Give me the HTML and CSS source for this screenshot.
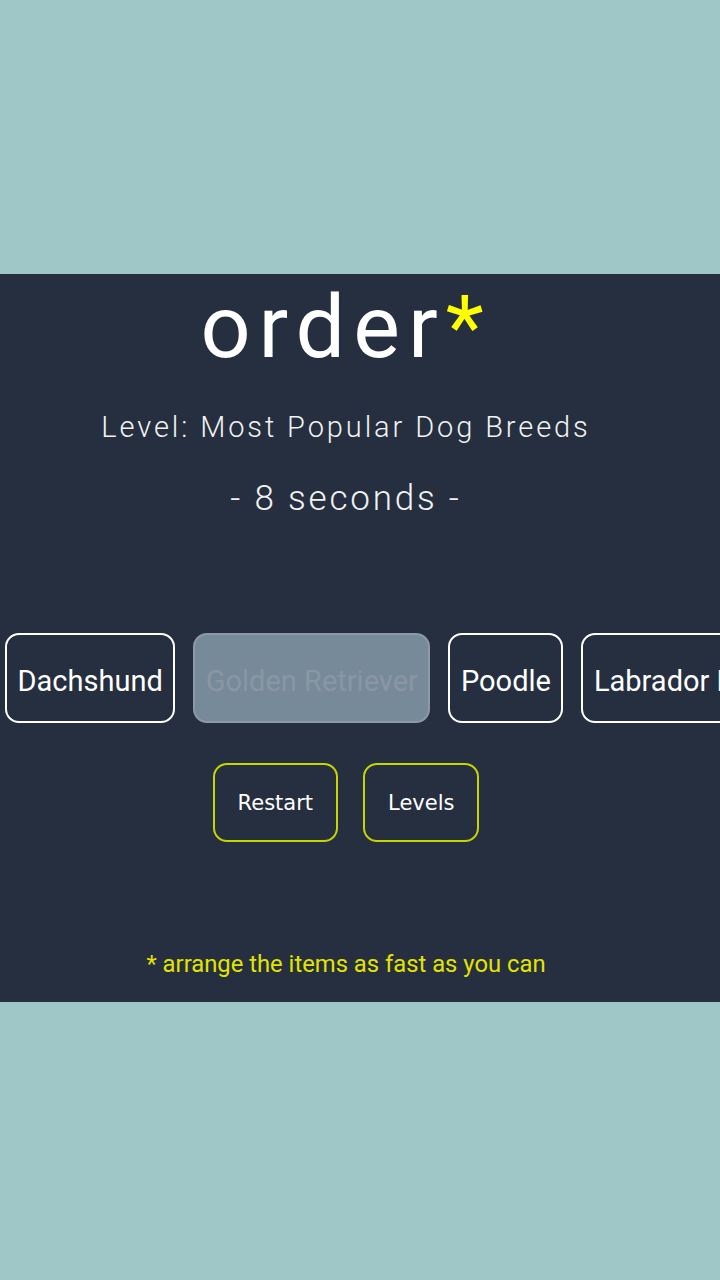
FILE: index.html
```html
<!DOCTYPE html>
<html lang="en">
<head>
<meta charset="utf-8">
<title>order*</title>
<link rel="stylesheet" href="styles.css">
</head>
<body>
<main class="panel">
  <h1 class="title">order<span class="star">*</span></h1>
  <p class="level">Level: Most Popular Dog Breeds</p>
  <p class="timer">- 8 seconds -</p>
  <div class="items">
    <div class="item">Dachshund</div>
    <div class="item item-dragging">Golden Retriever</div>
    <div class="item">Poodle</div>
    <div class="item">Labrador Retriever</div>
    <div class="item">German Shepherd</div>
  </div>
  <div class="controls">
    <button class="control">Restart</button>
    <button class="control">Levels</button>
  </div>
  <p class="hint">* arrange the items as fast as you can</p>
</main>
</body>
</html>
```

FILE: styles.css
```css
html, body {
  margin: 0;
  padding: 0;
}
body {
  background: #a0c7c8;
  height: 1280px;
  overflow: hidden;
  padding-top: 274px;
  box-sizing: border-box;
  font-family: Roboto, "Liberation Sans", sans-serif;
}
.panel {
  background: #252f3f;
  color: #ffffff;
  padding: 3px 28px 23px 0;
  display: flex;
  flex-direction: column;
  align-items: center;
}
.title {
  margin: 0;
  font-size: 88px;
  line-height: 100px;
  font-weight: 400;
  letter-spacing: 8px;
}
.star {
  color: #ffff00;
}
.level {
  margin: 30px 0 0;
  font-size: 29px;
  line-height: 40px;
  font-weight: 300;
  letter-spacing: 2.9px;
  color: #f2f2f2;
}
.timer {
  margin: 30px 0 0;
  font-size: 35px;
  line-height: 44px;
  font-weight: 300;
  letter-spacing: 2.8px;
  color: #f2f2f2;
}
.items {
  align-self: flex-start;
  margin-top: 112px;
  padding-left: 5px;
  display: flex;
  flex-wrap: nowrap;
  gap: 18px;
}
.item {
  flex: none;
  box-sizing: border-box;
  height: 90px;
  padding: 5px 10.5px 0;
  border: 2px solid #ffffff;
  border-radius: 14px;
  display: flex;
  align-items: center;
  font-size: 29px;
  font-weight: 400;
  white-space: nowrap;
  color: #ffffff;
}
.item-dragging {
  background: #778a9a;
  border-color: #8d99a5;
  color: #8a97a3;
}
.controls {
  margin-top: 40px;
  display: flex;
  gap: 25px;
}
.control {
  box-sizing: border-box;
  height: 79px;
  padding: 0 23px;
  background: transparent;
  border: 2px solid #c6d400;
  border-radius: 14px;
  color: #ffffff;
  font-family: "DejaVu Sans", Verdana, sans-serif;
  font-size: 21px;
}
.hint {
  margin: 107px 0 0;
  font-size: 23.8px;
  line-height: 30px;
  font-weight: 400;
  color: #e3e300;
}
```
